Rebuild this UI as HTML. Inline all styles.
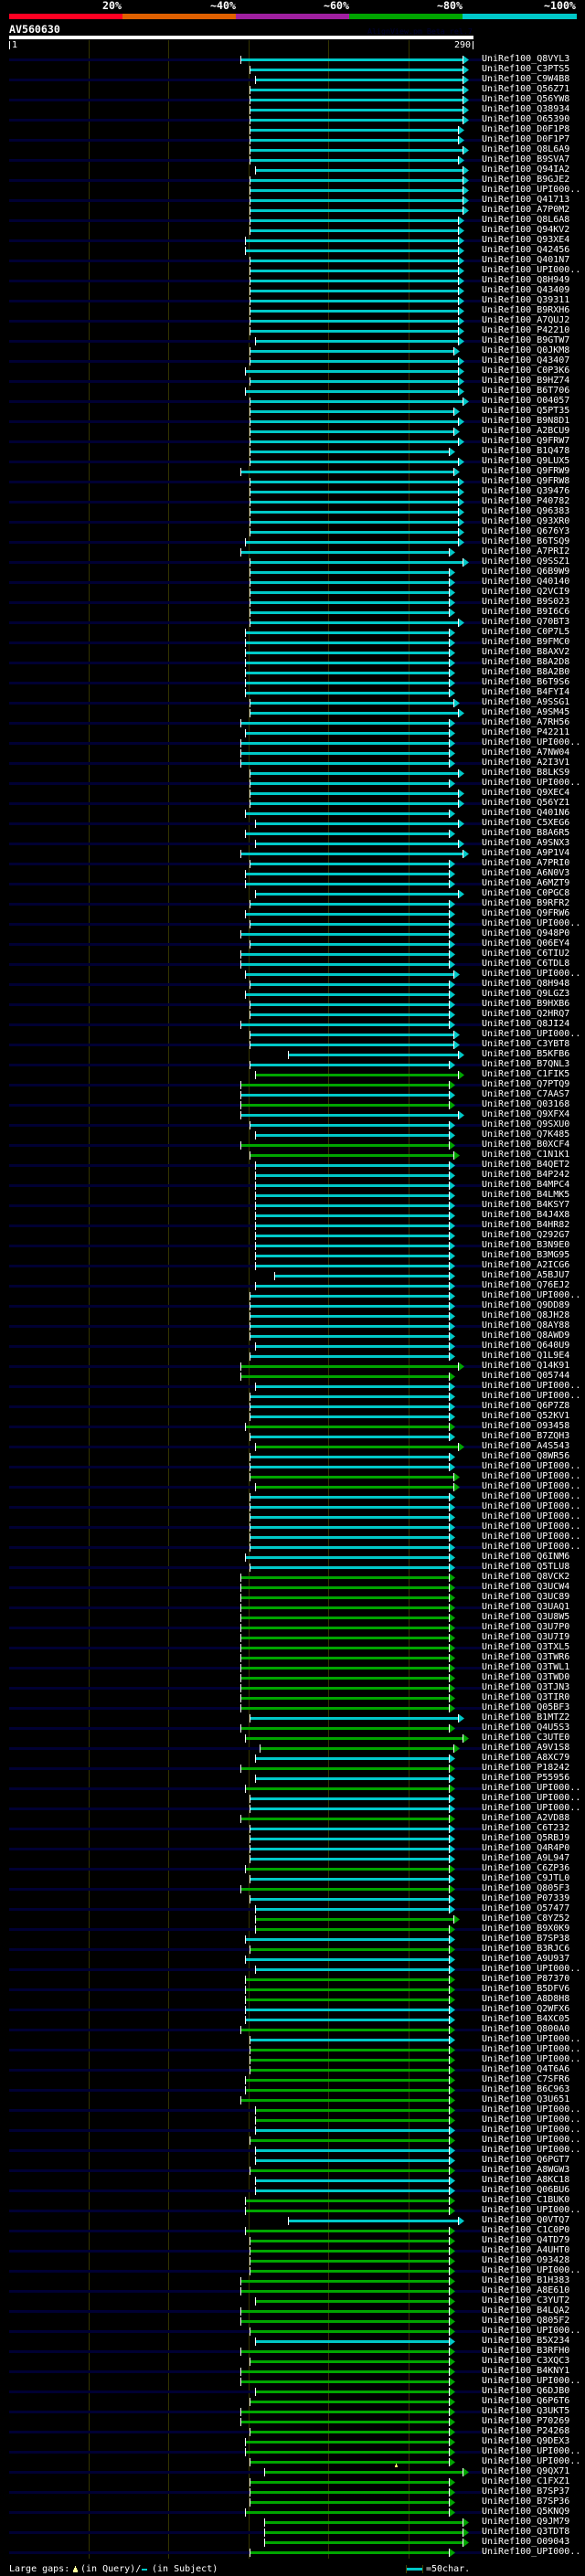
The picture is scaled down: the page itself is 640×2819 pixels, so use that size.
<!DOCTYPE html>
<html><head><meta charset="utf-8"><title>AV560630</title>
<style>
html,body{margin:0;padding:0;background:#000;}
body{position:relative;width:640px;height:2819px;overflow:hidden;color:#fff;font-family:"DejaVu Sans Mono","Liberation Mono",monospace;font-size:10px;}
.a{position:absolute;white-space:pre;}
.h{font-weight:bold;font-size:11.6px;line-height:13px;}
.t{line-height:11px;}
.k{position:absolute;top:15px;height:6px;}
.v{position:absolute;top:44px;width:1px;height:2756px;background:#333300;}
#rows{position:absolute;left:0;top:60px;width:640px;}
#rows p{margin:0;height:11px;line-height:9px;padding-left:527px;box-sizing:border-box;position:relative;white-space:pre;--c:#00c8c8;}
#rows p:nth-child(odd){background:linear-gradient(#000033,#000033) 10px 4px/517px 3px no-repeat;}
#rows p::before{content:"";position:absolute;left:var(--s);top:1px;width:calc(var(--e) - var(--s) + 1px);height:9px;box-sizing:border-box;border-left:1px solid #fff;border-right:1px solid #fff;background:linear-gradient(var(--c),var(--c)) 0 3px/100% 3px no-repeat;}
#rows p::after{content:"";position:absolute;left:calc(var(--e) + 1px);top:1px;width:6px;height:9px;background:var(--c);clip-path:polygon(0 0,100% 50%,0 100%);}
.g{--c:#00a500 !important;}
.s263{--s:263px}.s268{--s:268px}.s273{--s:273px}.s279{--s:279px}.s284{--s:284px}.s289{--s:289px}.s300{--s:300px}.s315{--s:315px}
.e491{--e:491px}.e496{--e:496px}.e501{--e:501px}.e506{--e:506px}
</style></head><body>
<span class="a h" style="left:112px;top:0">20%</span>
<span class="a h" style="left:230px;top:0">~40%</span>
<span class="a h" style="left:354px;top:0">~60%</span>
<span class="a h" style="left:478px;top:0">~80%</span>
<span class="a h" style="left:595px;top:0">~100%</span>
<div class="k" style="left:10px;width:124px;background:#ff0022"></div>
<div class="k" style="left:134px;width:124px;background:#e06000"></div>
<div class="k" style="left:258px;width:124px;background:#a020a0"></div>
<div class="k" style="left:382px;width:124px;background:#00a500"></div>
<div class="k" style="left:506px;width:125px;background:#00c8c8"></div>
<span class="a h" style="left:10px;top:26px">AV560630</span>
<span class="a" style="left:402px;top:29px;font-size:8.3px;line-height:11px;color:#000033">AlignView.pm Beta rel.7</span>
<div class="a" style="left:10px;top:39px;width:508px;height:4px;background:#fff"></div>
<div class="a" style="left:10px;top:45px;width:1px;height:9px;background:#fff"></div>
<span class="a t" style="left:13px;top:44px">1</span>
<span class="a t" style="left:497px;top:44px">290</span>
<div class="a" style="left:517px;top:45px;width:1px;height:9px;background:#fff"></div>
<div class="v" style="left:97px"></div>
<div class="v" style="left:184px"></div>
<div class="v" style="left:272px"></div>
<div class="v" style="left:359px"></div>
<div class="v" style="left:447px"></div>
<div id="rows">
<p class="s263 e506">UniRef100_Q8VYL3</p>
<p class="s273 e506">UniRef100_C3PTS5</p>
<p class="s279 e506">UniRef100_C9W4B8</p>
<p class="s273 e506">UniRef100_Q56Z71</p>
<p class="s273 e506">UniRef100_Q56YW8</p>
<p class="s273 e506">UniRef100_Q38934</p>
<p class="s273 e506">UniRef100_O65390</p>
<p class="s273 e501">UniRef100_D0F1P8</p>
<p class="s273 e501">UniRef100_D0F1P7</p>
<p class="s273 e506">UniRef100_Q8L6A9</p>
<p class="s273 e501">UniRef100_B9SVA7</p>
<p class="s279 e506">UniRef100_Q94IA2</p>
<p class="s273 e506">UniRef100_B9GJE2</p>
<p class="s273 e506">UniRef100_UPI000..</p>
<p class="s273 e506">UniRef100_Q41713</p>
<p class="s273 e506">UniRef100_A7P0M2</p>
<p class="s273 e501">UniRef100_Q8L6A8</p>
<p class="s273 e501">UniRef100_Q94KV2</p>
<p class="s268 e501">UniRef100_Q93XE4</p>
<p class="s268 e501">UniRef100_Q42456</p>
<p class="s273 e501">UniRef100_Q401N7</p>
<p class="s273 e501">UniRef100_UPI000..</p>
<p class="s273 e501">UniRef100_Q8H949</p>
<p class="s273 e501">UniRef100_Q43409</p>
<p class="s273 e501">UniRef100_Q39311</p>
<p class="s273 e501">UniRef100_B9RXH6</p>
<p class="s273 e501">UniRef100_A7QUJ2</p>
<p class="s273 e501">UniRef100_P42210</p>
<p class="s279 e501">UniRef100_B9GTW7</p>
<p class="s273 e496">UniRef100_Q0JKM8</p>
<p class="s273 e501">UniRef100_Q43407</p>
<p class="s268 e501">UniRef100_C0P3K6</p>
<p class="s273 e501">UniRef100_B9HZ74</p>
<p class="s268 e501">UniRef100_B6T706</p>
<p class="s273 e506">UniRef100_O04057</p>
<p class="s273 e496">UniRef100_Q5PT35</p>
<p class="s273 e501">UniRef100_B9N8D1</p>
<p class="s273 e496">UniRef100_A2BCU9</p>
<p class="s273 e501">UniRef100_Q9FRW7</p>
<p class="s273 e491">UniRef100_B1Q478</p>
<p class="s273 e501">UniRef100_Q9LUX5</p>
<p class="s263 e496">UniRef100_Q9FRW9</p>
<p class="s273 e501">UniRef100_Q9FRW8</p>
<p class="s273 e501">UniRef100_Q39476</p>
<p class="s273 e501">UniRef100_P40782</p>
<p class="s273 e501">UniRef100_Q96383</p>
<p class="s273 e501">UniRef100_Q93XR0</p>
<p class="s273 e501">UniRef100_Q676Y3</p>
<p class="s268 e501">UniRef100_B6TSQ9</p>
<p class="s263 e491">UniRef100_A7PRI2</p>
<p class="s273 e506">UniRef100_Q9SSZ1</p>
<p class="s273 e491">UniRef100_Q6B9W9</p>
<p class="s273 e491">UniRef100_Q40140</p>
<p class="s273 e491">UniRef100_Q2VCI9</p>
<p class="s273 e491">UniRef100_B9S023</p>
<p class="s273 e491">UniRef100_B9I6C6</p>
<p class="s273 e501">UniRef100_Q70BT3</p>
<p class="s268 e491">UniRef100_C0P7L5</p>
<p class="s268 e491">UniRef100_B9FMC0</p>
<p class="s268 e491">UniRef100_B8AXV2</p>
<p class="s268 e491">UniRef100_B8A2D8</p>
<p class="s268 e491">UniRef100_B8A2B0</p>
<p class="s268 e491">UniRef100_B6T9S6</p>
<p class="s268 e491">UniRef100_B4FYI4</p>
<p class="s273 e496">UniRef100_A9SSG1</p>
<p class="s273 e501">UniRef100_A9SM45</p>
<p class="s263 e491">UniRef100_A7RH56</p>
<p class="s268 e491">UniRef100_P42211</p>
<p class="s263 e491">UniRef100_UPI000..</p>
<p class="s263 e491">UniRef100_A7NW04</p>
<p class="s263 e491">UniRef100_A2I3V1</p>
<p class="s273 e501">UniRef100_B8LKS9</p>
<p class="s273 e491">UniRef100_UPI000..</p>
<p class="s273 e501">UniRef100_Q9XEC4</p>
<p class="s273 e501">UniRef100_Q56YZ1</p>
<p class="s268 e491">UniRef100_Q401N6</p>
<p class="s279 e501">UniRef100_C5XEG6</p>
<p class="s268 e491">UniRef100_B8A6R5</p>
<p class="s279 e501">UniRef100_A9SNX3</p>
<p class="s263 e506">UniRef100_A9P1V4</p>
<p class="s273 e491">UniRef100_A7PRI0</p>
<p class="s268 e491">UniRef100_A6N0V3</p>
<p class="s268 e491">UniRef100_A6MZT9</p>
<p class="s279 e501">UniRef100_C0PGC8</p>
<p class="s273 e491">UniRef100_B9RFR2</p>
<p class="s268 e491">UniRef100_Q9FRW6</p>
<p class="s273 e491">UniRef100_UPI000..</p>
<p class="s263 e491">UniRef100_Q948P0</p>
<p class="s273 e491">UniRef100_Q06EY4</p>
<p class="s263 e491">UniRef100_C6TIU2</p>
<p class="s263 e491">UniRef100_C6TDL8</p>
<p class="s268 e496">UniRef100_UPI000..</p>
<p class="s273 e491">UniRef100_Q8H948</p>
<p class="s268 e491">UniRef100_Q9LGZ3</p>
<p class="s273 e491">UniRef100_B9HXB6</p>
<p class="s273 e491">UniRef100_Q2HRQ7</p>
<p class="s263 e491">UniRef100_Q8JI24</p>
<p class="s273 e496">UniRef100_UPI000..</p>
<p class="s273 e496">UniRef100_C3YBT8</p>
<p class="s315 e501">UniRef100_B5KFB6</p>
<p class="s273 e491">UniRef100_B7QNL3</p>
<p class="s279 e501 g">UniRef100_C1FIK5</p>
<p class="s263 e491 g">UniRef100_Q7PTQ9</p>
<p class="s263 e491">UniRef100_C7AAS7</p>
<p class="s263 e491 g">UniRef100_Q03168</p>
<p class="s263 e501">UniRef100_Q9XFX4</p>
<p class="s273 e491">UniRef100_Q9SXU0</p>
<p class="s279 e491">UniRef100_Q7K485</p>
<p class="s263 e491 g">UniRef100_B0XCF4</p>
<p class="s273 e496 g">UniRef100_C1N1K1</p>
<p class="s279 e491">UniRef100_B4QET2</p>
<p class="s279 e491">UniRef100_B4P242</p>
<p class="s279 e491">UniRef100_B4MPC4</p>
<p class="s279 e491">UniRef100_B4LMK5</p>
<p class="s279 e491">UniRef100_B4KSY7</p>
<p class="s279 e491">UniRef100_B4J4X8</p>
<p class="s279 e491">UniRef100_B4HR82</p>
<p class="s279 e491">UniRef100_Q292G7</p>
<p class="s279 e491">UniRef100_B3N9E0</p>
<p class="s279 e491">UniRef100_B3MG95</p>
<p class="s279 e491">UniRef100_A2ICG6</p>
<p class="s300 e491">UniRef100_A5BJU7</p>
<p class="s279 e491">UniRef100_Q76EJ2</p>
<p class="s273 e491">UniRef100_UPI000..</p>
<p class="s273 e491">UniRef100_Q9DD89</p>
<p class="s273 e491">UniRef100_Q8JH28</p>
<p class="s273 e491">UniRef100_Q8AY88</p>
<p class="s273 e491">UniRef100_Q8AWD9</p>
<p class="s279 e491">UniRef100_Q640U9</p>
<p class="s273 e491">UniRef100_Q1L9E4</p>
<p class="s263 e501 g">UniRef100_Q14K91</p>
<p class="s263 e491 g">UniRef100_Q05744</p>
<p class="s279 e491">UniRef100_UPI000..</p>
<p class="s273 e491">UniRef100_UPI000..</p>
<p class="s273 e491">UniRef100_Q6P7Z8</p>
<p class="s273 e491">UniRef100_Q52KV1</p>
<p class="s268 e491 g">UniRef100_O93458</p>
<p class="s273 e491">UniRef100_B7ZQH3</p>
<p class="s279 e501 g">UniRef100_A4S543</p>
<p class="s273 e491">UniRef100_Q8WR56</p>
<p class="s273 e491">UniRef100_UPI000..</p>
<p class="s273 e496 g">UniRef100_UPI000..</p>
<p class="s279 e496 g">UniRef100_UPI000..</p>
<p class="s273 e491">UniRef100_UPI000..</p>
<p class="s273 e491">UniRef100_UPI000..</p>
<p class="s273 e491">UniRef100_UPI000..</p>
<p class="s273 e491">UniRef100_UPI000..</p>
<p class="s273 e491">UniRef100_UPI000..</p>
<p class="s273 e491">UniRef100_UPI000..</p>
<p class="s268 e491">UniRef100_Q6INM6</p>
<p class="s273 e491">UniRef100_Q5TLU8</p>
<p class="s263 e491 g">UniRef100_Q8VCK2</p>
<p class="s263 e491 g">UniRef100_Q3UCW4</p>
<p class="s263 e491 g">UniRef100_Q3UC89</p>
<p class="s263 e491 g">UniRef100_Q3UAQ1</p>
<p class="s263 e491 g">UniRef100_Q3U8W5</p>
<p class="s263 e491 g">UniRef100_Q3U7P0</p>
<p class="s263 e491 g">UniRef100_Q3U7I9</p>
<p class="s263 e491 g">UniRef100_Q3TXL5</p>
<p class="s263 e491 g">UniRef100_Q3TWR6</p>
<p class="s263 e491 g">UniRef100_Q3TWL1</p>
<p class="s263 e491 g">UniRef100_Q3TWD0</p>
<p class="s263 e491 g">UniRef100_Q3TJN3</p>
<p class="s263 e491 g">UniRef100_Q3TIR0</p>
<p class="s263 e491 g">UniRef100_Q05BF3</p>
<p class="s273 e501">UniRef100_B1MTZ2</p>
<p class="s263 e491 g">UniRef100_Q4U5S3</p>
<p class="s268 e506 g">UniRef100_C3UTE0</p>
<p class="s284 e496 g">UniRef100_A9V1S8</p>
<p class="s279 e491">UniRef100_A8XC79</p>
<p class="s263 e491 g">UniRef100_P18242</p>
<p class="s279 e491">UniRef100_P55956</p>
<p class="s268 e491 g">UniRef100_UPI000..</p>
<p class="s273 e491">UniRef100_UPI000..</p>
<p class="s273 e491">UniRef100_UPI000..</p>
<p class="s263 e491 g">UniRef100_A2VD88</p>
<p class="s273 e491">UniRef100_C6T232</p>
<p class="s273 e491">UniRef100_Q5RBJ9</p>
<p class="s273 e491">UniRef100_Q4R4P0</p>
<p class="s273 e491">UniRef100_A9L947</p>
<p class="s268 e491 g">UniRef100_C6ZP36</p>
<p class="s273 e491">UniRef100_C9JTL0</p>
<p class="s263 e491 g">UniRef100_Q805F3</p>
<p class="s273 e491">UniRef100_P07339</p>
<p class="s279 e491">UniRef100_O57477</p>
<p class="s279 e496 g">UniRef100_C8YZ52</p>
<p class="s279 e491 g">UniRef100_B9X0K9</p>
<p class="s268 e491">UniRef100_B7SP38</p>
<p class="s273 e491 g">UniRef100_B3RJC6</p>
<p class="s268 e491">UniRef100_A9U937</p>
<p class="s279 e491">UniRef100_UPI000..</p>
<p class="s268 e491 g">UniRef100_P87370</p>
<p class="s268 e491 g">UniRef100_B5DFV6</p>
<p class="s268 e491 g">UniRef100_A8D8H8</p>
<p class="s268 e491">UniRef100_Q2WFX6</p>
<p class="s268 e491">UniRef100_B4XC05</p>
<p class="s263 e491 g">UniRef100_Q800A0</p>
<p class="s273 e491">UniRef100_UPI000..</p>
<p class="s273 e491 g">UniRef100_UPI000..</p>
<p class="s273 e491 g">UniRef100_UPI000..</p>
<p class="s273 e491 g">UniRef100_Q4T6A6</p>
<p class="s268 e491 g">UniRef100_C7SFR6</p>
<p class="s268 e491 g">UniRef100_B6C963</p>
<p class="s263 e491 g">UniRef100_Q3U651</p>
<p class="s279 e491 g">UniRef100_UPI000..</p>
<p class="s279 e491 g">UniRef100_UPI000..</p>
<p class="s279 e491">UniRef100_UPI000..</p>
<p class="s273 e491 g">UniRef100_UPI000..</p>
<p class="s279 e491">UniRef100_UPI000..</p>
<p class="s279 e491">UniRef100_Q6PGT7</p>
<p class="s273 e491 g">UniRef100_A8WGW3</p>
<p class="s279 e491">UniRef100_A8KC18</p>
<p class="s279 e491">UniRef100_Q06BU6</p>
<p class="s268 e491 g">UniRef100_C1BUK0</p>
<p class="s268 e491 g">UniRef100_UPI000..</p>
<p class="s315 e501">UniRef100_Q0VTQ7</p>
<p class="s268 e491 g">UniRef100_C1C0P0</p>
<p class="s273 e491 g">UniRef100_Q4TD79</p>
<p class="s273 e491 g">UniRef100_A4UHT0</p>
<p class="s273 e491 g">UniRef100_O93428</p>
<p class="s273 e491 g">UniRef100_UPI000..</p>
<p class="s263 e491 g">UniRef100_B1H383</p>
<p class="s263 e491 g">UniRef100_A8E610</p>
<p class="s279 e491 g">UniRef100_C3YUT2</p>
<p class="s263 e491 g">UniRef100_B4LQA2</p>
<p class="s263 e491 g">UniRef100_Q805F2</p>
<p class="s273 e491 g">UniRef100_UPI000..</p>
<p class="s279 e491">UniRef100_B5X234</p>
<p class="s263 e491 g">UniRef100_B3RFH0</p>
<p class="s273 e491 g">UniRef100_C3XQC3</p>
<p class="s263 e491 g">UniRef100_B4KNY1</p>
<p class="s263 e491 g">UniRef100_UPI000..</p>
<p class="s279 e491 g">UniRef100_Q6DJB0</p>
<p class="s273 e491 g">UniRef100_Q6P6T6</p>
<p class="s263 e491 g">UniRef100_Q3UKT5</p>
<p class="s263 e491 g">UniRef100_P70269</p>
<p class="s273 e491 g">UniRef100_P24268</p>
<p class="s268 e491 g">UniRef100_Q9DEX3</p>
<p class="s268 e491 g">UniRef100_UPI000..</p>
<p class="s273 e491 g">UniRef100_UPI000..</p>
<p class="s289 e506 g">UniRef100_Q9QX71</p>
<p class="s273 e491 g">UniRef100_C1FXZ1</p>
<p class="s273 e491 g">UniRef100_B7SP37</p>
<p class="s273 e491 g">UniRef100_B7SP36</p>
<p class="s268 e491 g">UniRef100_Q5KNQ9</p>
<p class="s289 e506 g">UniRef100_Q9JM79</p>
<p class="s289 e506 g">UniRef100_Q3TDT8</p>
<p class="s289 e506 g">UniRef100_O09043</p>
<p class="s273 e491 g">UniRef100_UPI000..</p>
</div>
<svg class="a" style="left:0;top:0" width="640" height="2819" shape-rendering="crispEdges">
<rect x="433" y="2696" width="1" height="2" fill="#ffff66"/>
<rect x="432" y="2698" width="3" height="2" fill="#ffff66"/>
<rect x="82" y="2808" width="1" height="2" fill="#ffff99"/>
<rect x="81" y="2810" width="3" height="2" fill="#ffff99"/>
<rect x="80" y="2812" width="5" height="3" fill="#ffff99"/>
<rect x="155" y="2811" width="6" height="2" fill="#00c8c8"/>
<rect x="444" y="2807" width="1" height="9" fill="#444400"/>
<rect x="462" y="2807" width="1" height="9" fill="#444400"/>
<rect x="445" y="2810" width="17" height="3" fill="#00c8c8"/>
</svg>
<span class="a t" style="left:10px;top:2806px">Large gaps:</span>
<span class="a t" style="left:88px;top:2806px">(in Query)/</span>
<span class="a t" style="left:166px;top:2806px">(in Subject)</span>
<span class="a t" style="left:466px;top:2806px">=50char.</span>
</body></html>
